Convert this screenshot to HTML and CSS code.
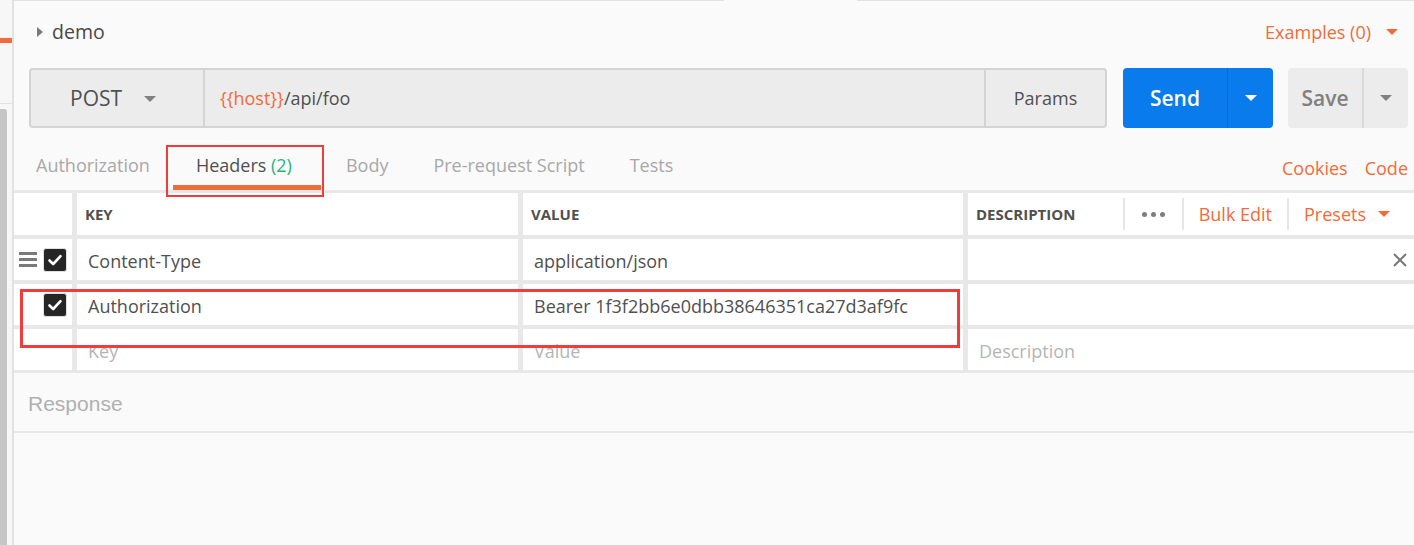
FILE: index.html
```html
<!DOCTYPE html>
<html>
<head>
  <title>demo - POST request</title>
  <link rel="stylesheet" href="styles.css">
</head>
<body>
  <div class="app">
    <div class="sidebar">
      <div class="side-accent"></div>
      <div class="side-rule"></div>
      <div class="side-scroll"></div>
    </div>

    <div class="main">
      <div class="top-edge">
        <span class="edge-left"></span>
        <span class="edge-right"></span>
      </div>

      <div class="title-row">
        <span class="caret-right"></span>
        <span class="title">demo</span>
        <span class="examples">Examples (0) <span class="caret-down orange"></span></span>
      </div>

      <div class="request-bar">
        <div class="url-group">
          <div class="method">POST <span class="caret-down grey"></span></div>
          <div class="url"><span class="var">{{host}}</span>/api/foo</div>
          <div class="params">Params</div>
        </div>
        <div class="send">
          <span class="send-label">Send</span>
          <span class="send-more"><span class="caret-down white"></span></span>
        </div>
        <div class="save">
          <span class="save-label">Save</span>
          <span class="save-more"><span class="caret-down grey"></span></span>
        </div>
      </div>

      <div class="tabs">
        <span class="tab">Authorization</span>
        <span class="tab active">Headers <span class="count">(2)</span></span>
        <span class="tab">Body</span>
        <span class="tab">Pre-request Script</span>
        <span class="tab">Tests</span>
        <span class="tab-links">
          <span class="link">Cookies</span>
          <span class="link">Code</span>
        </span>
      </div>

      <div class="headers-table">
        <div class="cell head"></div>
        <div class="cell head">KEY</div>
        <div class="cell head">VALUE</div>
        <div class="cell head desc-head">
          <span>DESCRIPTION</span>
          <span class="actions">
            <span class="action dots"><i></i><i></i><i></i></span>
            <span class="action link">Bulk Edit</span>
            <span class="action link">Presets <span class="caret-down orange"></span></span>
          </span>
        </div>

        <div class="cell ctrl">
          <span class="handle"><i></i><i></i><i></i></span>
          <span class="check">
            <svg width="16" height="16" viewBox="0 0 16 16"><path d="M2.5 8.5 L6.2 12 L13.5 4.2" fill="none" stroke="#fff" stroke-width="2.6" stroke-linecap="round" stroke-linejoin="round"/></svg>
          </span>
        </div>
        <div class="cell">Content-Type</div>
        <div class="cell">application/json</div>
        <div class="cell remove">
          <svg width="14" height="14" viewBox="0 0 14 14"><path d="M1 1 L13 13 M13 1 L1 13" stroke="#777" stroke-width="2"/></svg>
        </div>

        <div class="cell ctrl">
          <span class="handle hidden"><i></i><i></i><i></i></span>
          <span class="check">
            <svg width="16" height="16" viewBox="0 0 16 16"><path d="M2.5 8.5 L6.2 12 L13.5 4.2" fill="none" stroke="#fff" stroke-width="2.6" stroke-linecap="round" stroke-linejoin="round"/></svg>
          </span>
        </div>
        <div class="cell">Authorization</div>
        <div class="cell">Bearer 1f3f2bb6e0dbb38646351ca27d3af9fc</div>
        <div class="cell"></div>

        <div class="cell ctrl"></div>
        <div class="cell placeholder">Key</div>
        <div class="cell placeholder">Value</div>
        <div class="cell placeholder">Description</div>
      </div>

      <div class="response">Response</div>
    </div>
  </div>

  <!-- red annotation boxes drawn over the screenshot -->
  <div class="mark mark-tab"></div>
  <div class="mark mark-row"></div>
</body>
</html>
```

FILE: styles.css
```css
body {
  margin: 0;
  background-color: #fafafa;
  font-family: "Open Sans", "DejaVu Sans", sans-serif;
  color: #505050;
}

.app {
  display: flex;
  height: 545px;
  overflow: hidden;
}

/* left collection strip */
.sidebar {
  width: 12px;
  flex-shrink: 0;
  background-color: #f7f7f7;
  border-right: 2px solid #e2e2e2;
  display: flex;
  flex-direction: column;
}
.side-accent {
  margin-top: 38px;
  height: 5px;
  background-color: #f26b3a;
}
.side-rule {
  margin-top: 60px;
  height: 1px;
  background-color: #e3e3e3;
}
.side-scroll {
  margin-top: 5px;
  width: 7px;
  flex: 1;
  background-color: #c6c6c6;
  border-radius: 0 3px 0 0;
}

.main {
  flex: 1;
  display: flex;
  flex-direction: column;
  min-width: 0;
}

.top-edge {
  display: flex;
  height: 1px;
}
.edge-left {
  width: 710px;
  background-color: #e2e2e2;
}
.edge-right {
  flex: 1;
  margin-left: 133px;
  background-color: #e2e2e2;
}

/* title row */
.title-row {
  height: 67px;
  box-sizing: border-box;
  padding: 0 16px 6px 23px;
  display: flex;
  align-items: center;
}
.caret-right {
  width: 0;
  height: 0;
  border-top: 5px solid transparent;
  border-bottom: 5px solid transparent;
  border-left: 6px solid #7a7a7a;
  margin-right: 9px;
}
.title {
  font-size: 19.5px;
  color: #484848;
}
.examples {
  margin-left: auto;
  font-size: 18px;
  color: #f26b3a;
  display: flex;
  align-items: center;
}
.examples .caret-down {
  margin-left: 15px;
}

.caret-down {
  display: inline-block;
  width: 0;
  height: 0;
  border-left: 6px solid transparent;
  border-right: 6px solid transparent;
  border-top: 6px solid #7a7a7a;
}
.caret-down.orange {
  border-top-color: #f26b3a;
}
.caret-down.white {
  border-top-color: #ffffff;
}
.caret-down.grey {
  border-top-color: #808080;
}

/* request bar */
.request-bar {
  display: flex;
  height: 60px;
  margin: 0 6px 0 15px;
}
.url-group {
  flex: 1;
  display: flex;
  box-sizing: border-box;
  border: 2px solid #d4d4d4;
  border-radius: 4px;
  background-color: #ececec;
}
.method {
  width: 172px;
  box-sizing: border-box;
  padding-left: 39px;
  display: flex;
  align-items: center;
  font-size: 21px;
  color: #505050;
}
.method .caret-down {
  margin-left: 22px;
  margin-top: 2px;
}
.url {
  flex: 1;
  border-left: 2px solid #d4d4d4;
  display: flex;
  align-items: center;
  padding-left: 15px;
  font-size: 18px;
  color: #505050;
}
.url .var {
  color: #f26b3a;
}
.params {
  width: 119px;
  border-left: 2px solid #d4d4d4;
  display: flex;
  align-items: center;
  justify-content: center;
  font-size: 18px;
  color: #505050;
}

.send {
  width: 150px;
  margin-left: 16px;
  display: flex;
  background-color: #097bed;
  border-radius: 4px;
  color: #ffffff;
}
.send-label {
  width: 104px;
  display: flex;
  align-items: center;
  justify-content: center;
  font-size: 21px;
  font-weight: 600;
}
.send-more {
  flex: 1;
  border-left: 1px solid #0a66c8;
  display: flex;
  align-items: center;
  justify-content: center;
}

.save {
  width: 120px;
  margin-left: 15px;
  display: flex;
  background-color: #ececec;
  border-radius: 4px;
  color: #808080;
}
.save-label {
  width: 74px;
  display: flex;
  align-items: center;
  justify-content: center;
  font-size: 21px;
  font-weight: 600;
}
.save-more {
  flex: 1;
  border-left: 2px solid #dadada;
  display: flex;
  align-items: center;
  justify-content: center;
}

/* tabs */
.tabs {
  height: 62px;
  display: flex;
  align-items: stretch;
}
.tab {
  padding: 16px 22px 0 23px;
  box-sizing: border-box;
  display: flex;
  align-items: center;
  border-bottom: 5px solid transparent;
  font-size: 18px;
  color: #a8a8a8;
  white-space: pre;
}
.tab:first-child {
  padding-left: 22px;
  padding-right: 23px;
}
.tab.active {
  color: #505050;
  padding-right: 29px;
  border-bottom-color: #f26b3a;
}
.tab.active + .tab {
  padding-left: 25px;
}
.tab .count {
  color: #26b47f;
}
.tab-links {
  margin-left: auto;
  padding: 18px 6px 0 0;
  display: flex;
  align-items: center;
  gap: 17px;
}
.link {
  font-size: 18px;
  color: #f26b3a;
}

/* headers table */
.headers-table {
  display: grid;
  grid-template-columns: 58px 441px 440px 1fr;
  grid-auto-rows: 41px;
  grid-template-rows: 42px;
  column-gap: 5px;
  row-gap: 4px;
  padding: 3px 0;
  background-color: #e8e8e8;
}
.cell {
  background-color: #ffffff;
  display: flex;
  align-items: center;
  padding: 2px 0 0 11px;
  font-size: 18px;
  color: #505050;
  white-space: nowrap;
  overflow: hidden;
}
.cell.head {
  padding: 0 0 0 8px;
  font-size: 15px;
  font-weight: 700;
  color: #505050;
}
.cell.placeholder {
  color: #b5b5b5;
}
.cell.ctrl {
  padding: 0 0 0 5px;
}
.cell.remove {
  justify-content: flex-end;
  padding: 0 7px 0 0;
}
.desc-head .actions {
  margin-left: auto;
  margin-right: 24px;
  display: flex;
  align-items: center;
  height: 32px;
}
.action {
  height: 100%;
  display: flex;
  align-items: center;
  padding: 0 15px 0 15px;
  border-left: 2px solid #e6e6e6;
  font-size: 18px;
  font-weight: 400;
}
.action .caret-down {
  margin-left: 12px;
}
.action:last-child {
  padding-right: 0;
}
.dots i {
  width: 5px;
  height: 5px;
  border-radius: 50%;
  background-color: #7e7e7e;
  margin: 0 2px;
}

.handle {
  display: flex;
  flex-direction: column;
  gap: 3px;
  width: 18px;
}
.handle i {
  height: 3px;
  background-color: #7a7a7a;
}
.handle.hidden {
  visibility: hidden;
}
.check {
  margin-left: 6px;
  width: 22px;
  height: 22px;
  border: 1px solid #e0e0e0;
  border-radius: 3px;
  background-color: #262626;
  display: flex;
  align-items: center;
  justify-content: center;
}

/* response panel */
.response {
  height: 60px;
  box-sizing: border-box;
  padding: 4px 0 0 14px;
  border-bottom: 2px solid #e8e8e8;
  background-color: #fafafa;
  display: flex;
  align-items: center;
  font-family: "Liberation Sans", Arial, sans-serif;
  font-size: 21px;
  color: #b0b0b0;
}

/* red annotation marks */
.mark {
  position: absolute;
  border: 2px solid #f23c3c;
}
.mark-tab {
  left: 166px;
  top: 145px;
  width: 154px;
  height: 48px;
}
.mark-row {
  left: 20px;
  top: 289px;
  width: 934px;
  height: 53px;
  border-width: 3px;
}
```
